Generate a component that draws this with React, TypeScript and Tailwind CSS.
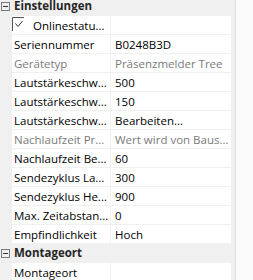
import React from "react";

type Row = { name: string; value: string; disabled?: boolean; check?: boolean };

const rows: Row[] = [
  { name: "Onlinestatu...", value: "", check: true },
  { name: "Seriennummer", value: "B0248B3D" },
  { name: "Gerätetyp", value: "Präsenzmelder Tree", disabled: true },
  { name: "Lautstärkeschw...", value: "500" },
  { name: "Lautstärkeschw...", value: "150" },
  { name: "Lautstärkeschw...", value: "Bearbeiten..." },
  { name: "Nachlaufzeit Pr...", value: "Wert wird von Baus...", disabled: true },
  { name: "Nachlaufzeit Be...", value: "60" },
  { name: "Sendezyklus La...", value: "300" },
  { name: "Sendezyklus He...", value: "900" },
  { name: "Max. Zeitabstan...", value: "0" },
  { name: "Empfindlichkeit", value: "Hoch" },
];

function Minus() {
  return (
    <svg width="9" height="9" viewBox="0 0 9 9" className="block">
      <rect x="0.5" y="0.5" width="8" height="8" fill="none" stroke="#7a7a7a" />
      <line x1="2" y1="4.5" x2="7" y2="4.5" stroke="#333" />
    </svg>
  );
}

function Header({ label }: { label: string }) {
  return (
    <div className="relative flex h-[18px] w-[231px] items-center bg-[#f0f0f0]">
      <div className="absolute left-[1px] top-[5px]">
        <Minus />
      </div>
      <span className="pl-[14px] text-[11.5px] font-bold leading-[18px] text-[#262626]">{label}</span>
    </div>
  );
}

function Item({ r }: { r: Row }) {
  const color = r.disabled ? "text-[#7a7a7a]" : "text-black";
  return (
    <div className="ml-[12px] flex h-[18px] w-[219px] gap-[1px]">
      <div className={`relative flex w-[98px] items-center overflow-hidden whitespace-nowrap bg-white ${r.check ? "pl-[21px]" : "pl-[2px]"} ${color}`}>
        {r.check && (
          <svg width="16" height="14" viewBox="0 0 16 14" className="absolute left-0 top-[1px]">
            <path d="M0.5 14 V0.5 H12" fill="none" stroke="#555" />
            <path d="M3.5 6.5 L6 9.5 L10.5 4" fill="none" stroke="#333" strokeWidth="1" />
          </svg>
        )}
        <span className="leading-[18px] pt-[1px]">{r.name}</span>
      </div>
      <div className={`flex w-[120px] items-center overflow-hidden whitespace-nowrap bg-white pl-[4px] ${color}`}>
        <span className="leading-[18px] pt-[1px]">{r.value}</span>
      </div>
    </div>
  );
}

export default function App() {
  return (
    <div
      className="flex h-[280px] w-[253px] overflow-hidden bg-[#fbfbfb] text-[11.5px]"
      style={{ fontFamily: '"Open Sans", "Noto Sans", sans-serif' }}
    >
      <div className="h-full w-[235px] overflow-hidden bg-[#f0f0f0]">
        <div className="mt-[-3px] flex flex-col gap-[1px]">
          <Header label="Einstellungen" />
          {rows.map((r, i) => (
            <Item key={i} r={r} />
          ))}
          <Header label="Montageort" />
          <Item r={{ name: "Montageort", value: "" }} />
        </div>
      </div>
      <div className="h-full w-[1px] bg-[#e2e2e2]" />
    </div>
  );
}
